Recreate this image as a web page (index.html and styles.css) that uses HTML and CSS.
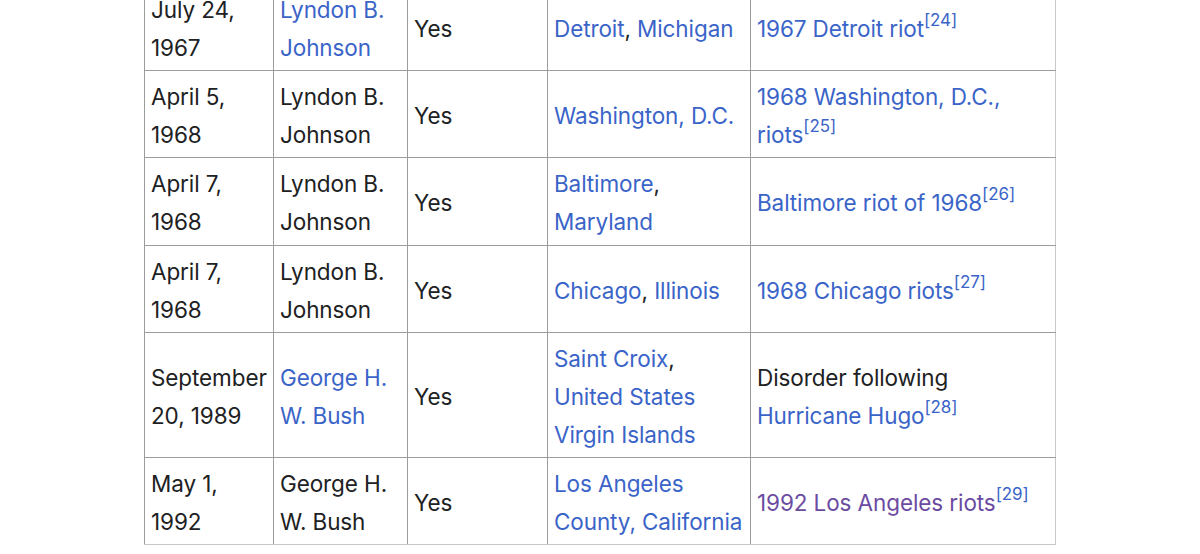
FILE: index.html
```html
<!DOCTYPE html>
<html lang="en">
<head>
    <meta charset="UTF-8">
    <meta name="viewport" content="width=device-width, initial-scale=1.0">
    <title>Federal troop deployments</title>
    <link rel="stylesheet" href="styles.css">
</head>
<body>

    <!-- Table of deployments (scrolled part) -->
    <div class="page">
        <table class="wikitable">
            <colgroup>
                <col class="col-date">
                <col class="col-president">
                <col class="col-yes">
                <col class="col-place">
                <col class="col-event">
            </colgroup>
            <tr>
                <td>July 24, 1967</td>
                <td><a href="#">Lyndon B. Johnson</a></td>
                <td>Yes</td>
                <td><a href="#">Detroit</a>, <a href="#">Michigan</a></td>
                <td><a href="#">1967 Detroit riot</a><sup><a href="#">[24]</a></sup></td>
            </tr>
            <tr>
                <td>April 5, 1968</td>
                <td>Lyndon B. Johnson</td>
                <td>Yes</td>
                <td><a href="#">Washington, D.C.</a></td>
                <td><a href="#">1968 Washington, D.C., riots</a><sup><a href="#">[25]</a></sup></td>
            </tr>
            <tr>
                <td>April 7, 1968</td>
                <td>Lyndon B. Johnson</td>
                <td>Yes</td>
                <td><a href="#">Baltimore</a>, <a href="#">Maryland</a></td>
                <td><a href="#">Baltimore riot of 1968</a><sup><a href="#">[26]</a></sup></td>
            </tr>
            <tr>
                <td>April 7, 1968</td>
                <td>Lyndon B. Johnson</td>
                <td>Yes</td>
                <td><a href="#">Chicago</a>, <a href="#">Illinois</a></td>
                <td><a href="#">1968 Chicago riots</a><sup><a href="#">[27]</a></sup></td>
            </tr>
            <tr>
                <td>September 20, 1989</td>
                <td><a href="#">George H. W. Bush</a></td>
                <td>Yes</td>
                <td><a href="#">Saint Croix</a>, <a href="#">United States Virgin Islands</a></td>
                <td>Disorder following <a href="#">Hurricane Hugo</a><sup><a href="#">[28]</a></sup></td>
            </tr>
            <tr>
                <td>May 1, 1992</td>
                <td>George H. W. Bush</td>
                <td>Yes</td>
                <td><a href="#">Los Angeles County, California</a></td>
                <td><a href="#" class="visited">1992 Los Angeles riots</a><sup><a href="#">[29]</a></sup></td>
            </tr>
        </table>
    </div>

</body>
</html>
```

FILE: styles.css
```css
* {
    margin: 0;
    padding: 0;
    box-sizing: border-box;
}
body {
    font-family: Inter, "Noto Sans", Arial, sans-serif;
    background: #ffffff;
    color: #202122;
    overflow: hidden;
}
/* Page column */
.page {
    padding-left: 144px;
    margin-top: -17px;
}
/* Table */
.wikitable {
    border-collapse: collapse;
    table-layout: fixed;
    width: 911px;
    font-size: 22.5px;
    letter-spacing: -0.1px;
    line-height: 38.1px;
    border: 1px solid #c8c8c8;
}
.col-date { width: 129px; }
.col-president { width: 134px; }
.col-yes { width: 140px; }
.col-place { width: 203px; }
.col-event { width: 305px; }
.wikitable td {
    border: 1px solid #9c9c9c;
    padding: 7px 6px 3px;
    vertical-align: middle;
    text-align: left;
}
.wikitable tr:last-child td {
    border-bottom-color: #c8c8c8;
}
.wikitable td:last-child {
    border-right-color: #c8c8c8;
}
a {
    color: #3a64c8;
    text-decoration: none;
}
a.visited {
    color: #6b4ba1;
}
sup {
    font-size: 17px;
    line-height: 1;
    vertical-align: 11px;
}
```
